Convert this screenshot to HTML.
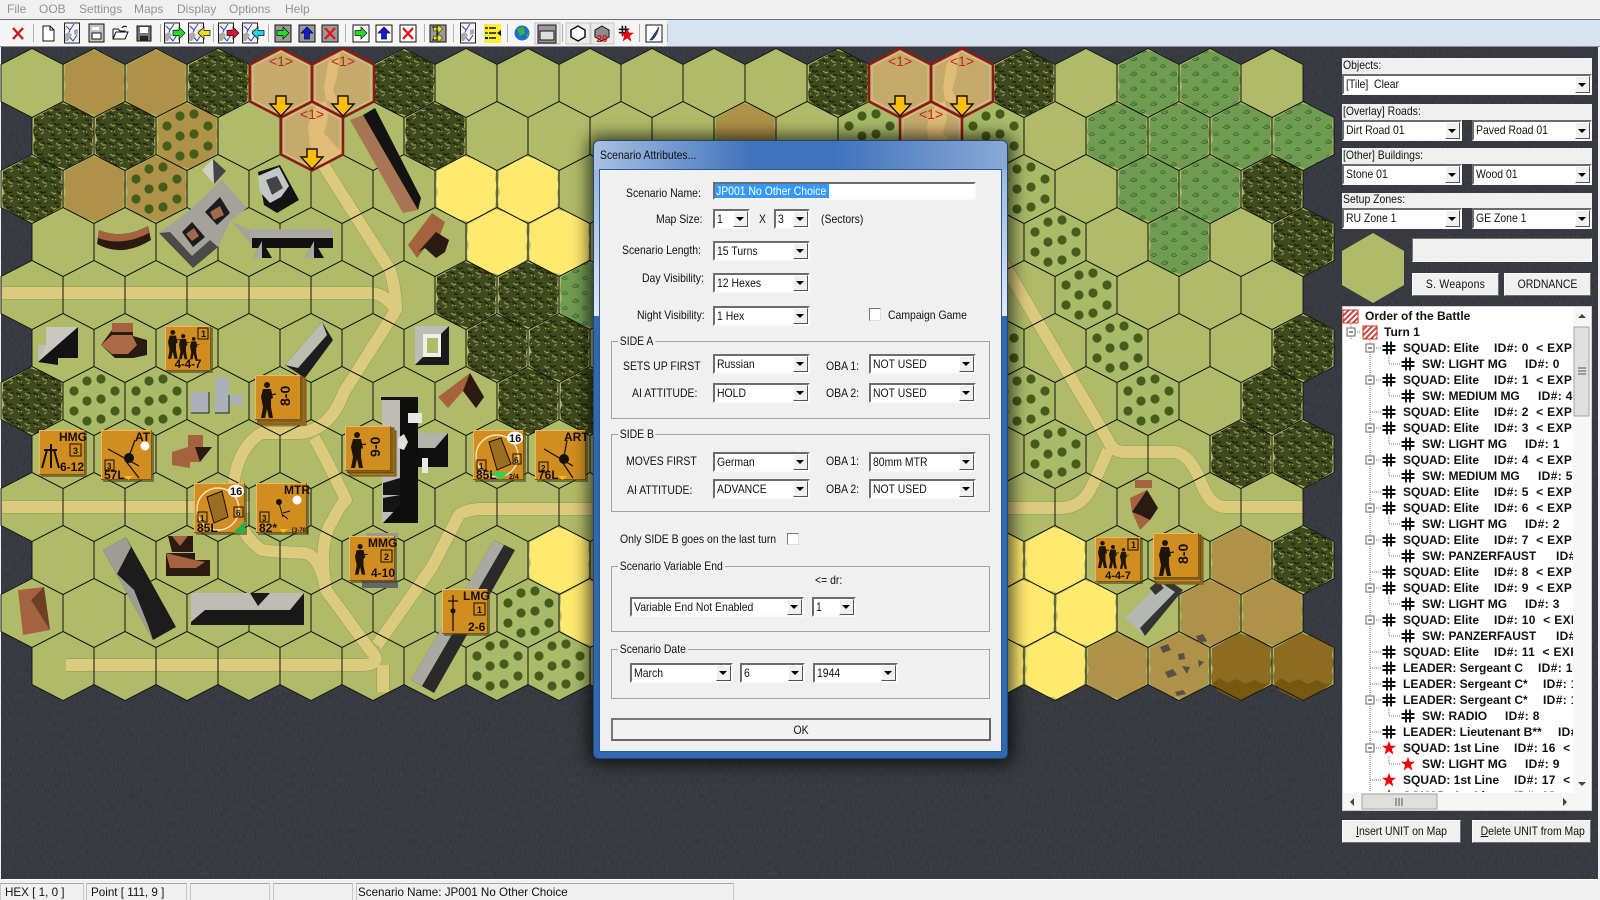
<!DOCTYPE html>
<html><head><meta charset="utf-8"><title>Scenario Attributes</title>
<style>
html,body{margin:0;padding:0;width:1600px;height:900px;overflow:hidden;background:#f0f0f0;font-family:"Liberation Sans",sans-serif}
svg{position:absolute;display:block}
.t{position:absolute;white-space:pre;font:12px/14px "Liberation Sans",sans-serif;color:#111;transform:scaleX(.87);transform-origin:0 0}
.lg{background:#f0f0f0;padding:0 2px}
.gp{position:absolute;border:1px solid #a2a2a2;box-sizing:border-box}
.s{position:absolute;background:#f0f0f0}
.cb{position:absolute;background:#fff;box-sizing:border-box;border:2px solid;border-color:#6c6c6c #fafafa #fafafa #6c6c6c}
.cb::before{content:"";position:absolute;right:0;top:0;bottom:0;width:15px;background:#f0f0f0;border:1px solid;border-color:#fff #555 #555 #fff;box-sizing:border-box}
.cb::after{content:"";position:absolute;right:4px;top:50%;margin-top:-2px;border:4px solid transparent;border-top-color:#000;border-bottom:0}
.cb b{font-weight:normal;position:absolute;left:2px;top:1px;font-size:12px;line-height:14px;white-space:pre;color:#111;transform:scaleX(.87);transform-origin:0 0}
.bt{position:absolute;background:#f0f0f0;box-sizing:border-box;border:1px solid;border-color:#fafafa #707070 #707070 #fafafa;text-align:center;font-size:12px;color:#111}
.bt span{display:block;transform:scaleX(.87);white-space:pre}
#tr{position:absolute;left:1342px;top:306px;width:231px;height:486px;overflow:hidden}
#tr p{position:absolute;margin:0;font:bold 12px/16px "Liberation Sans",sans-serif;color:#111;white-space:pre}
#tr .a{left:61px}#tr .b{left:80px}
#tr i{position:absolute;top:0;font-style:normal;letter-spacing:.35px}
.sb{position:absolute;top:883px;height:17px;background:#f0f0f0;border-top:1px solid #a8a8a8;border-left:1px solid #c8c8c8;border-right:1px solid #c8c8c8;box-sizing:border-box}
</style></head><body>

<svg width="1600" height="900" viewBox="0 0 1600 900" style="left:0;top:0">
<defs>
<filter id="nz" x="0" y="0" width="100%" height="100%"><feTurbulence type="fractalNoise" baseFrequency="0.9 0.18" numOctaves="2" seed="4"/><feColorMatrix values="0 0 0 0 0 0 0 0 0 0 0 0 0 0 0 .9 0 0 0 -.2"/></filter>
<pattern id="pw" width="17" height="15" patternUnits="userSpaceOnUse"><rect width="17" height="15" fill="#3f4a1e"/><path d="M2 3l3 2 2-1M10 7l2 2 3 0M3 11l2-2 2 2M12 13l3-2" stroke="#a2a55c" stroke-width="1" fill="none"/><path d="M1 7l3 1 2 2M8 2l2 2 4-1M5 14l4 0M13 6l3 2" stroke="#1e250a" stroke-width="1.5" fill="none"/></pattern>
<pattern id="pg" width="20" height="15" patternUnits="userSpaceOnUse"><rect width="20" height="15" fill="#709c51"/><path d="M2 6q3 3 7 0M4 6v-2M6 6v-3M8 6v-2M12 13q3 3 6 0M14 13v-2M16 13v-2" stroke="#2f5a2a" stroke-width=".8" fill="none"/></pattern>
<polygon id="p" points="0,-34.5 31,-18.5 31,18.5 0,34.5 -31,18.5 -31,-18.5"/>
<polygon id="wb" points="-2,-33 4,-31 10,-30 17,-26 24,-22 30,-18 29,-10 31,-3 29,4 30,11 29,18 22,22 15,27 9,29 3,33 -3,31 -10,30 -16,26 -23,22 -29,18 -30,10 -28,3 -30,-4 -29,-11 -29,-18 -23,-21 -16,-25 -9,-29"/>
<g id="rw"><use href="#p" x="32"/><use href="#p" x="94"/><use href="#p" x="156"/><use href="#p" x="218"/><use href="#p" x="280"/><use href="#p" x="342"/><use href="#p" x="404"/><use href="#p" x="466"/><use href="#p" x="528"/><use href="#p" x="590"/><use href="#p" x="652"/><use href="#p" x="714"/><use href="#p" x="776"/><use href="#p" x="838"/><use href="#p" x="900"/><use href="#p" x="962"/><use href="#p" x="1024"/><use href="#p" x="1086"/><use href="#p" x="1148"/><use href="#p" x="1210"/><use href="#p" x="1272"/></g>
<g id="all"><use href="#rw" y="83"/><use href="#rw" x="31" y="136"/><use href="#rw" y="189"/><use href="#rw" x="31" y="242"/><use href="#rw" y="295"/><use href="#rw" x="31" y="348"/><use href="#rw" y="401"/><use href="#rw" x="31" y="454"/><use href="#rw" y="507"/><use href="#rw" x="31" y="560"/><use href="#rw" y="613"/><use href="#rw" x="31" y="666"/></g>
<g id="f"><use href="#wb" fill="#ae9248"/></g>
<g id="w"><use href="#wb" fill="url(#pw)"/></g>
<g id="y"><use href="#wb" fill="#ffe96e"/></g>
<g id="g"><use href="#wb" fill="url(#pg)"/></g>
<g id="d"><use href="#wb" fill="#8d6b20"/><path d="M-29 18l7 -6 8 5 10 -4 8 5 10-4 8 4 7-1-8 6-15 9-7 3-6-2-16-8z" fill="#77580f"/></g>
<g id="od" fill="#465c1c"><circle cx="-20" cy="-10" r="4.6"/><circle cx="-20" cy="10" r="4.6"/><circle cx="-7" cy="-20" r="4.6"/><circle cx="-7" cy="0" r="4.6"/><circle cx="-7" cy="20" r="4.6"/><circle cx="7" cy="-22" r="4.6"/><circle cx="7" cy="-2" r="4.6"/><circle cx="7" cy="18" r="4.6"/><circle cx="21" cy="-10" r="4.6"/><circle cx="21" cy="10" r="4.6"/></g>
<g id="o"><use href="#wb" fill="#a9ba68"/><use href="#od"/></g>
<g id="ob"><use href="#wb" fill="#ae9248"/><use href="#od"/></g>
<g id="ss"><use href="#p" fill="#c4aa6b"/></g>
<g id="sr"><use href="#p" fill="none" stroke="#8c1a14" stroke-width="2.5"/><polygon points="0,-31.5 28,-17 28,17 0,31.5 -28,17 -28,-17" fill="none" stroke="#dcc9a0" stroke-width=".8"/><text x="0" y="-17" text-anchor="middle" font-family="Liberation Sans" font-size="14" fill="#c8201a">&lt;1&gt;</text></g>
<g id="ua"><polygon points="-5,13 5,13 5,21 11,21 0,33 -11,21 -5,21" fill="#ffbe0a" stroke="#111" stroke-width="1.4"/></g>
<g id="c1"><rect x="2" y="2" width="46" height="45" fill="#3c3a20" opacity=".55"/><rect width="46" height="45" fill="#d18d1f"/><path d="M.5 45V.5H46" stroke="#efb85e" fill="none"/><path d="M45.5 0V44.5H0" stroke="#7d5510" fill="none"/></g>
<g id="c2"><rect x="2" y="2" width="51" height="50" fill="#3c3a20" opacity=".55"/><rect width="51" height="50" fill="#d18d1f"/><path d="M.5 50V.5H51" stroke="#efb85e" fill="none"/><path d="M50.5 0V49.5H0" stroke="#7d5510" fill="none"/></g>
<g id="sol" fill="#1f1507"><circle cx="6" cy="3" r="3"/><path d="M2 7h8l2 9-2 1v8l2 11H8l-2-9-2 9H0l2-11-2-10z"/><path d="M9 13L15 12" stroke="#1f1507" stroke-width="1.2"/></g>
<g id="md"><rect x="-7.500" y="-10" width="15" height="20" fill="#f4f4f4" stroke="#222"/><path d="M-6-7l4 4-2 5 5 6M-2-3l4-6M1 8l4-6" stroke="#2447b5" fill="none"/><path d="M-7 1l4-2 3 3-4 6h-3zM2-3l4-1v5l-4 1z" fill="#aaa"/></g>
<polygon id="ar" points="-6,-2.5 0,-2.5 0,-6 6,0 0,6 0,2.5 -6,2.5" stroke="#111" stroke-width=".7"/>
<path id="x" d="M-2-6.5V6.5M2-6.5V6.5M-6.5-2H6.5M-6.5 2H6.5" stroke="#111" stroke-width="1.9" fill="none"/>
<polygon id="st" points="0,-7 1.8,-2.2 7,-2.2 2.8,1 4.4,6.5 0,3.2 -4.4,6.5 -2.8,1 -7,-2.2 -1.8,-2.2" fill="#f00000"/>
<pattern id="hat" width="4" height="4" patternUnits="userSpaceOnUse" patternTransform="rotate(-45)"><rect width="4" height="4" fill="#fff"/><rect width="4" height="2" fill="#c9473f"/></pattern>
</defs>

<!-- background -->
<rect width="1600" height="900" fill="#f0f0f0"/>
<rect x="1" y="47" width="1597" height="832" fill="#3d4047"/>
<rect x="1" y="47" width="1597" height="832" filter="url(#nz)" opacity=".35"/>
<rect x="0" y="879" width="1600" height="1" fill="#fff"/>

<!-- hexes -->
<g fill="#b0bb69"><use href="#all"/></g>
<g>
<use href="#f" x="94" y="83"/><use href="#f" x="156" y="83"/><use href="#w" x="218" y="83"/><use href="#w" x="404" y="83"/><use href="#w" x="838" y="83"/><use href="#w" x="1024" y="83"/><use href="#g" x="1148" y="83"/><use href="#g" x="1210" y="83"/>
<use href="#f" x="63" y="136"/><use href="#f" x="125" y="136"/><use href="#w" x="63" y="136"/><use href="#w" x="125" y="136"/><use href="#ob" x="187" y="136"/><use href="#w" x="435" y="136"/><use href="#f" x="745" y="136"/><use href="#o" x="869" y="136"/><use href="#o" x="993" y="136"/><use href="#g" x="1117" y="136"/><use href="#g" x="1179" y="136"/><use href="#g" x="1241" y="136"/><use href="#g" x="1303" y="136"/>
<use href="#w" x="32" y="189"/><use href="#f" x="94" y="189"/><use href="#ob" x="156" y="189"/><use href="#y" x="466" y="189"/><use href="#y" x="528" y="189"/><use href="#o" x="1024" y="189"/><use href="#g" x="1148" y="189"/><use href="#g" x="1210" y="189"/><use href="#w" x="1272" y="189"/>
<use href="#y" x="497" y="242"/><use href="#y" x="559" y="242"/><use href="#o" x="1055" y="242"/><use href="#g" x="1179" y="242"/><use href="#w" x="1303" y="242"/>
<use href="#w" x="466" y="295"/><use href="#w" x="528" y="295"/><use href="#g" x="590" y="295"/><use href="#o" x="1086" y="295"/>
<use href="#w" x="497" y="348"/><use href="#w" x="559" y="348"/><use href="#o" x="993" y="348"/><use href="#o" x="1117" y="348"/><use href="#w" x="1303" y="348"/>
<use href="#w" x="32" y="401"/><use href="#o" x="94" y="401"/><use href="#o" x="156" y="401"/><use href="#w" x="528" y="401"/><use href="#w" x="590" y="401"/><use href="#o" x="1024" y="401"/><use href="#o" x="1148" y="401"/><use href="#w" x="1272" y="401"/>
<use href="#o" x="1055" y="454"/><use href="#w" x="1241" y="454"/><use href="#w" x="1303" y="454"/>
<use href="#y" x="559" y="560"/><use href="#y" x="993" y="560"/><use href="#y" x="1055" y="560"/><use href="#f" x="1241" y="560"/><use href="#w" x="1303" y="560"/>
<use href="#o" x="528" y="613"/><use href="#y" x="590" y="613"/><use href="#y" x="1024" y="613"/><use href="#y" x="1086" y="613"/><use href="#f" x="1210" y="613"/><use href="#f" x="1272" y="613"/>
<use href="#o" x="497" y="666"/><use href="#o" x="559" y="666"/><use href="#y" x="993" y="666"/><use href="#y" x="1055" y="666"/><use href="#f" x="1117" y="666"/><use href="#f" x="1179" y="666"/><use href="#d" x="1241" y="666"/><use href="#d" x="1303" y="666"/>
</g>

<!-- roads -->
<g fill="none" stroke-linejoin="round">
<path d="M2 293H370Q385 293 396 310L344 392Q330 430 300 433H262Q240 445 234 480Q232 530 262 550Q275 552 305 553Q320 556 326 590L370 650Q385 665 360 665H66M322 163L390 270Q396 290 396 310M314 438Q322 450 346 500Q340 505 333 520Q318 540 326 590M2 507H250M383 665V692M377 645L432 567L459 515Q465 510 480 509H592M1000 258L1108 440Q1112 452 1125 452H1175Q1190 455 1200 480Q1210 507 1225 507H1303M1108 450Q1100 470 1090 490Q1080 508 1060 508H1000" stroke="#878c4a" stroke-width="13" stroke-opacity=".75"/>
<path d="M2 293H370Q385 293 396 310L344 392Q330 430 300 433H262Q240 445 234 480Q232 530 262 550Q275 552 305 553Q320 556 326 590L370 650Q385 665 360 665H66M322 163L390 270Q396 290 396 310M314 438Q322 450 346 500Q340 505 333 520Q318 540 326 590M2 507H250M383 665V692M377 645L432 567L459 515Q465 510 480 509H592M1000 258L1108 440Q1112 452 1125 452H1175Q1190 455 1200 480Q1210 507 1225 507H1303M1108 450Q1100 470 1090 490Q1080 508 1060 508H1000" stroke="#dccb7c" stroke-width="12"/>
</g>

<!-- grid -->
<g fill="none" stroke="#111" stroke-width=".9"><use href="#all"/></g>

<!-- setup zones -->
<use href="#ss" x="281" y="83"/><use href="#ss" x="343" y="83"/><use href="#ss" x="900" y="83"/><use href="#ss" x="962" y="83"/><use href="#ss" x="312" y="136"/><use href="#ss" x="931" y="136"/>
<g fill="#e0bc76"><path d="M328 63L324 87L326 100L341 107L333 90L337 77L340 52z"/><path d="M328 117L324 133L341 152L322 168L310 147L308 127L312 110L326 100z"/><path d="M947 63L943 87L945 100L960 107L952 90L956 77L959 52z"/><path d="M947 117L943 133L960 152L941 168L929 147L927 127L931 110L945 100z"/></g>
<use href="#sr" x="281" y="83"/><use href="#sr" x="343" y="83"/><use href="#sr" x="900" y="83"/><use href="#sr" x="962" y="83"/><use href="#sr" x="312" y="136"/><use href="#sr" x="931" y="136"/>
<use href="#ua" x="281" y="83"/><use href="#ua" x="343" y="83"/><use href="#ua" x="900" y="83"/><use href="#ua" x="962" y="83"/><use href="#ua" x="312" y="136"/>

<!-- rough -->
<g fill="#55504a"><path d="M1160 647l8-3 3 6-8 3zM1196 636l7-2 4 7-8 2zM1178 654l6-1 1 6-6 1zM1198 660l6 2-5 5zM1165 672l8-3 4 6-9 3zM1182 666l8 1-3 7zM1175 692l8-2 3 4-9 2z"/></g>

<!-- buildings -->
<g>
<path d="M213 159L226 171L214 184L202 170z" fill="#cfcfc7"/><path d="M213 159L226 171L214 184z" fill="#444"/>
<path d="M258 172L280 165L299 200L277 213L264 205z" fill="#131313"/><path d="M258 176L279 167L289 186L281 197L270 203L260 192z" fill="#c3c8c6"/><path d="M266 180L277 176L283 188L272 195z" fill="#444"/>
<path d="M159 233L190 210L222 180L247 208L230 222L218 247L193 268z" fill="#a3a39b"/><path d="M159 233L193 268L218 247L210 240L192 256L170 232z" fill="#4a4a46"/><path d="M182 232L192 222L205 237L193 247z" fill="#1c1c1c"/><path d="M186 234L194 228L199 236L192 241z" fill="#a26a4a"/><path d="M205 212L220 197L230 213L217 225z" fill="#1c1c1c"/><path d="M210 212L220 206L224 215L214 220z" fill="#a26a4a"/>
<path d="M232 222L250 230L333 229V248H255z" fill="#a3a39b"/><rect x="252" y="238" width="81" height="10" fill="#111"/><rect x="250" y="229" width="83" height="9" fill="#aaaaa2"/>
<path d="M253 258L262 241L272 258z" fill="#111"/><path d="M253 258L262 241V258z" fill="#aaaaa2"/><path d="M305 258L314 241L324 258z" fill="#111"/><path d="M305 258L314 241V258z" fill="#aaaaa2"/>
<path d="M99 230Q122 240 148 226L151 240Q122 258 97 244z" fill="#2a1a12"/><path d="M99 230Q122 240 148 226L149 233Q122 247 98 238z" fill="#a5623f"/>
<path d="M350 120L363 115L418 210L403 213z" fill="#a87454"/><path d="M363 115L375 108L421 198L418 210z" fill="#131313"/>
<path d="M408 245L432 213L445 222L440 235L449 240L445 252L436 258L425 248L417 258z" fill="#a5623f"/><path d="M418 252L436 232L449 240L445 252L436 258L425 248z" fill="#2a1a12"/>
<path d="M38 362L46 352V345L78 327V358H58V365z" fill="#131313"/><path d="M38 362V345L46 345L78 327L46 327V345z" fill="#bdbdb5"/><path d="M38 362L78 327H46L46 345z" fill="#c8c8c0"/>
<path d="M101 345L112 330V323H133V336L147 340V355L133 358H115z" fill="#2a1a12"/><path d="M101 345L112 335H132L137 345L128 354H112z" fill="#ad6a48"/><path d="M112 323H133V332H112z" fill="#a5623f"/>
<path d="M285 365L322 322L333 340L305 378z" fill="#1d1d1d"/><path d="M285 365L322 322L327 335L298 368z" fill="#b9bdb2"/>
<path d="M415 326H449V365H415z" fill="#bdbdb5"/><path d="M423 334H441V357H423z" fill="#f0f0ea"/><path d="M427 338H438V353H427z" fill="#b0bb69"/><path d="M449 326V365H415L423 357H441V334z" fill="#1a1a1a"/>
<path d="M191 392H209V413H191zM215 377H229V395H243V405H229V413H215z" fill="#aab0b8"/><path d="M209 392V413H191M229 395V413H215" stroke="#222" fill="none"/>
<path d="M438 397L470 373L484 397L476 408L463 391L448 408z" fill="#a5623f"/><path d="M470 373L484 397L476 408L463 391z" fill="#2a1a12"/>
<rect x="381" y="397" width="37" height="3" fill="#111"/><rect x="382" y="400" width="18" height="123" fill="#bdbdb5"/><rect x="400" y="400" width="18" height="123" fill="#0d0d0d"/>
<path d="M418 433H448L435 448H418z" fill="#b3b3ab"/><path d="M448 433V467H418V448H435z" fill="#101010"/><path d="M408 413H422V423H408zM422 458H428V473H422z" fill="#e8e8e0"/><path d="M383 483L400 478V495H383zM383 498L400 495V512H383z" fill="#151515"/><path d="M383 523L400 505L418 523z" fill="#0d0d0d"/><path d="M398 438l6-4 4 8-4 8-6-2z" fill="#e0e0d8"/>
<path d="M172 465V452L188 447V435H203V447H212L200 462H190V468z" fill="#a5623f"/><path d="M195 447L212 447L200 462z" fill="#2a1a12"/>
<path d="M103 550L126 537L176 627L153 640z" fill="#1c1c1c"/><path d="M103 550L126 537L131 547L117 574L134 590L148 625L153 640z" fill="#9d9d95"/>
<path d="M168 536H193V552H172z" fill="#2a1a12"/><path d="M172 536H188L180 546z" fill="#a5623f"/><path d="M166 553H195V560H210V576H166z" fill="#2a1a12"/><path d="M166 553L195 560L205 562L196 568H170z" fill="#a5623f"/>
<path d="M18 590L44 587L50 630L23 635z" fill="#a5623f"/><path d="M31 600L44 587L50 630z" fill="#6d3f27"/>
<path d="M191 593H304V625H191z" fill="#191919"/><path d="M191 593L205 610H290L304 593H270L258 606L250 593zM191 593V622L205 610z" fill="#bdbdb5"/>
<path d="M494 540L515 550L434 693L411 680z" fill="#2a2a2a"/><path d="M494 540L504 545L422 686L411 680z" fill="#aaaaa2"/>
<path d="M1135 480H1152V488H1135zM1130 498L1147 490L1158 508L1150 520L1140 530L1132 512z" fill="#a5623f"/><path d="M1147 490L1158 508L1150 520L1140 515L1132 512z" fill="#2a1a12"/>
<path d="M1125 618L1165 578L1183 590L1145 636z" fill="#b4b8b2"/><path d="M1145 636L1183 590L1165 578L1160 582L1175 592L1140 628z" fill="#333"/><rect x="1151" y="584" width="11" height="9" fill="#333" transform="rotate(-40 1156 588)"/>
<rect x="366" y="533" width="32" height="5" fill="#9a9a92"/><rect x="362" y="580" width="36" height="8" fill="#666"/>
</g>

<!-- counters -->
<g font-family="Liberation Sans" font-weight="bold" fill="#17100a">
<g transform="translate(165,326)"><use href="#c1"/><rect x="33" y="2" width="10" height="11" fill="none" stroke="#111"/><text x="36" y="11" font-size="9">1</text><use href="#sol" transform="translate(3,4) scale(.8)"/><use href="#sol" transform="translate(14,8) scale(.7)"/><use href="#sol" transform="translate(25,11) scale(.62)"/><text x="23" y="42" font-size="11.500" text-anchor="middle">4-4-7</text></g>
<g transform="translate(260,379)"><rect width="46" height="46" fill="#b47a18" stroke="#6b4a10"/></g>
<g transform="translate(258,377)"><rect width="46" height="46" fill="#d18d1f" stroke="#6b4a10"/></g>
<g transform="translate(255,375)"><use href="#c1"/><use href="#sol" x="6" y="7"/><text font-size="14" transform="translate(35,31) rotate(-90)">8-0</text></g>
<g transform="translate(39,430)"><use href="#c1"/><text x="20" y="11" font-size="12">HMG</text><rect x="31" y="14" width="11" height="12" fill="none" stroke="#111"/><text x="34" y="24" font-size="9">3</text><path d="M5 20H18M12 14V38M8 20L3 38M15 20L20 38" stroke="#111" stroke-width="2" fill="none"/><text x="21" y="41" font-size="12">6-12</text></g>
<g transform="translate(101,430)"><use href="#c2"/><text x="34" y="11" font-size="12">AT</text><circle cx="44" cy="16" r="4.5" fill="#fff"/><path d="M7 19L38 36M34 10L26 32M24 30L38 48" stroke="#111" stroke-width="1.2" fill="none"/><circle cx="28" cy="28" r="5" fill="#111"/><rect x="4" y="30" width="9" height="10" fill="none" stroke="#111"/><text x="6" y="39" font-size="8">3</text><text x="3" y="49" font-size="12">57L</text><polygon points="23,46 32,46 27.500,50" fill="#f0c020"/></g>
<g transform="translate(350,431)"><rect width="46" height="45" fill="#b47a18" stroke="#6b4a10"/></g>
<g transform="translate(348,428)"><rect width="46" height="45" fill="#d18d1f" stroke="#6b4a10"/></g>
<g transform="translate(345,426)"><use href="#c1"/><use href="#sol" x="6" y="6"/><text font-size="14" transform="translate(35,31) rotate(-90)">9-0</text></g>
<g transform="translate(473,430)"><use href="#c2"/><circle cx="24" cy="26" r="21" fill="none" stroke="#f3e4c0" stroke-width="1.4"/><ellipse cx="42" cy="8" rx="8" ry="6.500" fill="#fff"/><text x="36" y="12" font-size="11">16</text><path d="M16 12L28 8L38 34L24 40z" fill="#9a6d20" stroke="#111"/><rect x="4" y="30" width="9" height="10" fill="none" stroke="#111"/><text x="6" y="39" font-size="8">1</text><rect x="40" y="24" width="8" height="10" fill="none" stroke="#111"/><text x="41" y="33" font-size="8">6</text><text x="3" y="49" font-size="12">85L</text><text x="36" y="49" font-size="7">2/4</text><polygon points="18,42 36,42 27,50" fill="#3ad04e"/></g>
<g transform="translate(535,430)"><use href="#c2"/><text x="29" y="11" font-size="12">ART</text><path d="M9 19L38 36M32 10L28 32M26 30L38 48" stroke="#111" stroke-width="1.2" fill="none"/><circle cx="29" cy="29" r="5" fill="#111"/><rect x="4" y="32" width="9" height="10" fill="none" stroke="#111"/><text x="6" y="41" font-size="8">2</text><text x="3" y="49" font-size="12">76L</text><polygon points="23,46 32,46 27.500,50" fill="#f0c020"/></g>
<g transform="translate(194,483)"><use href="#c2"/><circle cx="24" cy="26" r="21" fill="none" stroke="#f3e4c0" stroke-width="1.4"/><ellipse cx="42" cy="8" rx="8" ry="6.500" fill="#fff"/><text x="36" y="12" font-size="11">16</text><path d="M13 14L28 8L34 34L20 40z" fill="#9a6d20" stroke="#111"/><rect x="4" y="29" width="9" height="10" fill="none" stroke="#111"/><text x="6" y="38" font-size="8">1</text><rect x="40" y="24" width="9" height="10" fill="none" stroke="#111"/><text x="42" y="33" font-size="8">6</text><text x="3" y="49" font-size="12">85L</text><polygon points="39,50 51,50 51,38" fill="#22b14c"/></g>
<g transform="translate(256,483)"><use href="#c2"/><text x="28" y="11" font-size="12">MTR</text><circle cx="41" cy="17" r="4.5" fill="#fff"/><circle cx="23" cy="19" r="3" fill="#111"/><path d="M23 20L27 34M27 30L34 28M27 32L32 36" stroke="#111" fill="none"/><rect x="4" y="29" width="9" height="10" fill="none" stroke="#111"/><text x="6" y="38" font-size="8">3</text><text x="3" y="49" font-size="12">82*</text><polygon points="23,46 32,46 27.500,50" fill="#f0c020"/><text x="36" y="49" font-size="6">[3-78]</text></g>
<g transform="translate(349,536)"><use href="#c1"/><text x="19" y="11" font-size="12">MMG</text><rect x="32" y="14" width="11" height="12" fill="none" stroke="#111"/><text x="35" y="24" font-size="9">2</text><use href="#sol" transform="translate(6,8) scale(.85)"/><text x="22" y="41" font-size="12">4-10</text></g>
<g transform="translate(442,589)"><use href="#c1"/><text x="21" y="11" font-size="12">LMG</text><rect x="32" y="14" width="11" height="12" fill="none" stroke="#111"/><text x="35" y="24" font-size="9">1</text><path d="M11 6V42M6 12H16" stroke="#111" stroke-width="1.3"/><circle cx="11" cy="22" r="2.500" fill="#111"/><text x="26" y="42" font-size="12">2-6</text></g>
<g transform="translate(1095,537)"><use href="#c1"/><rect x="33" y="2" width="10" height="11" fill="none" stroke="#111"/><text x="36" y="11" font-size="9">1</text><use href="#sol" transform="translate(3,4) scale(.75)"/><use href="#sol" transform="translate(14,8) scale(.65)"/><use href="#sol" transform="translate(25,11) scale(.58)"/><text x="23" y="42" font-size="11" text-anchor="middle">4-4-7</text></g>
<g transform="translate(1157,537)"><rect width="46" height="47" fill="#b47a18" stroke="#6b4a10"/></g>
<g transform="translate(1155,535)"><rect width="46" height="47" fill="#d18d1f" stroke="#6b4a10"/></g>
<g transform="translate(1153,533)"><use href="#c1"/><use href="#sol" x="6" y="7"/><text font-size="14" transform="translate(35,31) rotate(-90)">8-0</text></g>
</g>

<!-- toolbar & menu -->
<rect x="0" y="0" width="1600" height="19" fill="#f0f0f0"/><rect x="0" y="19" width="1600" height="1" fill="#6f6f6f"/>
<rect x="0" y="20" width="667" height="27" fill="#f5f5f5"/>
<rect x="667" y="20" width="933" height="27" fill="#d7e2f2"/><rect x="0" y="46" width="1600" height="1" fill="#8f9096"/>
<g fill="#b0b0b0"><rect x="33" y="24" width="1" height="18"/><rect x="160" y="24" width="1" height="18"/><rect x="213" y="24" width="1" height="18"/><rect x="268" y="24" width="1" height="18"/><rect x="345" y="24" width="1" height="18"/><rect x="424" y="24" width="1" height="18"/><rect x="453" y="24" width="1" height="18"/><rect x="507" y="24" width="1" height="18"/><rect x="562" y="24" width="1" height="18"/><rect x="639" y="24" width="1" height="18"/><rect x="667" y="24" width="1" height="18"/></g>
<path d="M13 28L23 39M23 28L13 39" stroke="#d01818" stroke-width="2.4" fill="none"/>
<path d="M43 26H50L54 30V41H43z" fill="#fff" stroke="#111"/><path d="M50 26V30H54" fill="none" stroke="#111"/>
<use href="#md" x="72" y="33"/>
<rect x="89" y="24" width="15" height="18" fill="#c4c4c4" stroke="#111"/><rect x="92" y="33" width="9" height="6" fill="#fff" stroke="#111"/><rect x="92" y="27" width="7" height="3" fill="#fff"/>
<path d="M113 29V39H125L128 32H116L113 39M113 29H118L120 31H125V32" fill="#fff" stroke="#111"/><path d="M122 28Q124 25 127 27" stroke="#111" fill="none"/>
<path d="M137 26H151V41H137z" fill="#777" stroke="#111"/><rect x="140" y="27" width="8" height="6" fill="#fff"/><rect x="140" y="36" width="8" height="5" fill="#222"/>
<use href="#md" x="172" y="33"/><use href="#ar" x="179" y="33" fill="#22dd22"/>
<use href="#md" x="196" y="33"/><use href="#ar" transform="translate(204,33) rotate(180)" fill="#f0e020"/>
<use href="#md" x="226" y="33"/><use href="#ar" x="233" y="33" fill="#e01030"/>
<use href="#md" x="250" y="33"/><use href="#ar" transform="translate(258,33) rotate(180)" fill="#22d8e8"/>
<rect x="275" y="25" width="16" height="17" fill="#9a9a9a" stroke="#111"/><use href="#ar" x="283" y="33" fill="#22dd22"/>
<rect x="299" y="25" width="16" height="17" fill="#9a9a9a" stroke="#111"/><use href="#ar" transform="translate(307,33) rotate(-90)" fill="#0a1ee0"/>
<rect x="322" y="25" width="16" height="17" fill="#9a9a9a" stroke="#111"/><path d="M325 28L335 39M335 28L325 39" stroke="#e01818" stroke-width="2.400"/>
<rect x="353" y="25" width="16" height="17" fill="#fff" stroke="#111"/><use href="#ar" x="361" y="33" fill="#22dd22"/>
<rect x="376" y="25" width="16" height="17" fill="#fff" stroke="#111"/><use href="#ar" transform="translate(384,33) rotate(-90)" fill="#0a1ee0"/>
<rect x="400" y="25" width="16" height="17" fill="#fff" stroke="#111"/><path d="M403 28L413 39M413 28L403 39" stroke="#e01818" stroke-width="2.400"/>
<rect x="430" y="25" width="16" height="17" fill="#9a9a9a" stroke="#111"/><use href="#ar" transform="translate(438,29) scale(.75)" fill="#f0e020"/><use href="#ar" transform="translate(438,38) scale(.75)" fill="#f0e020"/><path d="M432 27H437V40H432" fill="none" stroke="#111"/>
<use href="#md" x="468" y="33"/>
<rect x="484" y="24" width="17" height="19" fill="#fbf030"/><path d="M489 28H496M489 33H496M489 38H496" stroke="#111" stroke-width="1.500"/><rect x="485" y="27" width="3" height="2" fill="#c00"/><rect x="485" y="32" width="3" height="2" fill="#090"/><rect x="485" y="37" width="3" height="2" fill="#00c"/><path d="M497 33L501 30V36z" fill="#111"/>
<circle cx="522" cy="33" r="7.500" fill="#1a6ed0"/><path d="M517 28L524 27L525 33L520 36zM526 35L529 32L528 38z" fill="#3fae3f"/>
<rect x="535" y="23" width="25" height="21" fill="#ececec" stroke="#c0c0c0"/><rect x="538" y="25" width="18" height="18" fill="#999" stroke="#111"/><rect x="540" y="31" width="14" height="9" fill="#ddd" stroke="#111"/>
<rect x="566" y="23" width="24" height="21" fill="#ececec" stroke="#c8c8c8"/><polygon points="578,26 585,30 585,37 578,41 571,37 571,30" fill="#fff" stroke="#111" stroke-width="1.500"/>
<rect x="591" y="23" width="23" height="21" fill="#e8e8e8" stroke="#c8c8c8"/><polygon points="602,26 609,30 609,37 602,41 595,37 595,30" fill="#8d8d8d" stroke="#111"/><text x="602" y="42" text-anchor="middle" font-family="Liberation Sans" font-weight="bold" font-size="10" fill="#e01010">20</text>
<use href="#x" transform="translate(624,31) scale(.8)"/><use href="#st" transform="translate(627,35)"/>
<rect x="646" y="25" width="16" height="17" fill="#fff" stroke="#111"/><path d="M650 40Q656 32 659 27Q657 36 652 40z" fill="#2450a8" stroke="#111" stroke-width=".6"/>

<text font-family="Liberation Sans" font-size="12" fill="#929292" y="13"><tspan x="7">File</tspan><tspan x="39">OOB</tspan><tspan x="79">Settings</tspan><tspan x="134">Maps</tspan><tspan x="177">Display</tspan><tspan x="229">Options</tspan><tspan x="285">Help</tspan></text>

<!-- panel hex preview -->
<polygon points="1373,233 1404,251 1404,285 1373,303 1342,285 1342,251" fill="#b0bb69"/>
</svg>

<!-- right panel -->
<div class="s" style="left:1342px;top:58px;width:250px;height:16px"></div><div class="t" style="left:1343px;top:58px">Objects:</div>
<div class="cb" style="left:1342px;top:74px;width:250px;height:21px"><b>[Tile]  Clear</b></div>
<div class="s" style="left:1342px;top:104px;width:250px;height:16px"></div><div class="t" style="left:1343px;top:104px">[Overlay] Roads:</div>
<div class="cb" style="left:1342px;top:120px;width:120px;height:21px"><b>Dirt Road 01</b></div><div class="cb" style="left:1472px;top:120px;width:120px;height:21px"><b>Paved Road 01</b></div>
<div class="s" style="left:1342px;top:148px;width:250px;height:16px"></div><div class="t" style="left:1343px;top:148px">[Other] Buildings:</div>
<div class="cb" style="left:1342px;top:164px;width:120px;height:21px"><b>Stone 01</b></div><div class="cb" style="left:1472px;top:164px;width:120px;height:21px"><b>Wood 01</b></div>
<div class="s" style="left:1342px;top:193px;width:250px;height:15px"></div><div class="t" style="left:1343px;top:192px">Setup Zones:</div>
<div class="cb" style="left:1342px;top:208px;width:120px;height:21px"><b>RU Zone 1</b></div><div class="cb" style="left:1472px;top:208px;width:120px;height:21px"><b>GE Zone 1</b></div>
<div class="s" style="left:1412px;top:238px;width:180px;height:24px;border:1px solid #777;box-sizing:border-box;border-right-color:#fff;border-bottom-color:#fff"></div>
<div class="bt" style="left:1412px;top:273px;width:87px;height:23px;line-height:21px"><span style="letter-spacing:.3px">S. Weapons</span></div>
<div class="bt" style="left:1504px;top:273px;width:87px;height:23px;line-height:21px"><span>ORDNANCE</span></div>

<!-- tree -->
<div style="position:absolute;left:1342px;top:306px;width:250px;height:505px;background:#fff;box-sizing:border-box;border:1px solid #d0d0d0"></div>
<div id="tr">
<p style="left:23px;top:2px">Order of the Battle</p>
<p style="left:42px;top:18px">Turn 1</p>
<p class="a" style="top:34px">SQUAD: Elite<i style="left:91px">ID#: 0  &lt; EXP</i></p>
<p class="b" style="top:50px">SW: LIGHT MG<i style="left:103px">ID#: 0</i></p>
<p class="a" style="top:66px">SQUAD: Elite<i style="left:91px">ID#: 1  &lt; EXP</i></p>
<p class="b" style="top:82px">SW: MEDIUM MG<i style="left:116px">ID#: 4</i></p>
<p class="a" style="top:98px">SQUAD: Elite<i style="left:91px">ID#: 2  &lt; EXP</i></p>
<p class="a" style="top:114px">SQUAD: Elite<i style="left:91px">ID#: 3  &lt; EXP</i></p>
<p class="b" style="top:130px">SW: LIGHT MG<i style="left:103px">ID#: 1</i></p>
<p class="a" style="top:146px">SQUAD: Elite<i style="left:91px">ID#: 4  &lt; EXP</i></p>
<p class="b" style="top:162px">SW: MEDIUM MG<i style="left:116px">ID#: 5</i></p>
<p class="a" style="top:178px">SQUAD: Elite<i style="left:91px">ID#: 5  &lt; EXP</i></p>
<p class="a" style="top:194px">SQUAD: Elite<i style="left:91px">ID#: 6  &lt; EXP</i></p>
<p class="b" style="top:210px">SW: LIGHT MG<i style="left:103px">ID#: 2</i></p>
<p class="a" style="top:226px">SQUAD: Elite<i style="left:91px">ID#: 7  &lt; EXP</i></p>
<p class="b" style="top:242px">SW: PANZERFAUST<i style="left:134px">ID#: 6</i></p>
<p class="a" style="top:258px">SQUAD: Elite<i style="left:91px">ID#: 8  &lt; EXP</i></p>
<p class="a" style="top:274px">SQUAD: Elite<i style="left:91px">ID#: 9  &lt; EXP</i></p>
<p class="b" style="top:290px">SW: LIGHT MG<i style="left:103px">ID#: 3</i></p>
<p class="a" style="top:306px">SQUAD: Elite<i style="left:91px">ID#: 10  &lt; EXP</i></p>
<p class="b" style="top:322px">SW: PANZERFAUST<i style="left:134px">ID#: 7</i></p>
<p class="a" style="top:338px">SQUAD: Elite<i style="left:91px">ID#: 11  &lt; EXP</i></p>
<p class="a" style="top:354px">LEADER: Sergeant C<i style="left:135px">ID#: 12</i></p>
<p class="a" style="top:370px">LEADER: Sergeant C*<i style="left:140px">ID#: 13</i></p>
<p class="a" style="top:386px">LEADER: Sergeant C*<i style="left:140px">ID#: 14</i></p>
<p class="b" style="top:402px">SW: RADIO<i style="left:83px">ID#: 8</i></p>
<p class="a" style="top:418px">LEADER: Lieutenant B**<i style="left:155px">ID#: 15</i></p>
<p class="a" style="top:434px">SQUAD: 1st Line<i style="left:111px">ID#: 16  &lt;</i></p>
<p class="b" style="top:450px">SW: LIGHT MG<i style="left:103px">ID#: 9</i></p>
<p class="a" style="top:466px">SQUAD: 1st Line<i style="left:111px">ID#: 17  &lt;</i></p>
<p class="a" style="top:482px">SQUAD: 1st Line<i style="left:111px">ID#: 18  &lt;</i></p>
</div>
<svg width="250" height="505" viewBox="1342 306 250 505" style="left:1342px;top:306px">
<defs><clipPath id="tc"><rect x="1342" y="306" width="231" height="486"/></clipPath></defs>
<rect x="1573" y="307" width="18" height="486" fill="#f6f6f6"/>
<path d="M1578 318L1582 314L1586 318z" fill="#444"/><path d="M1578 782L1582 786L1586 782z" fill="#444"/>
<rect x="1574" y="327" width="15" height="89" fill="#dfdfdf" stroke="#a6a6a6"/><path d="M1578 368H1586M1578 371H1586M1578 374H1586" stroke="#555"/>
<rect x="1343" y="793" width="248" height="17" fill="#f6f6f6"/>
<path d="M1354 798L1350 802L1354 806z" fill="#444"/><path d="M1563 798L1567 802L1563 806z" fill="#444"/>
<rect x="1362" y="794" width="75" height="15" fill="#dfdfdf" stroke="#a6a6a6"/><path d="M1396 798V806M1399 798V806M1402 798V806" stroke="#555"/>
<g clip-path="url(#tc)">
<path d="M1351 322V340M1351 332H1361M1370 340V792M1370 348H1382M1370 380H1382M1370 412H1382M1370 428H1382M1370 460H1382M1370 492H1382M1370 508H1382M1370 540H1382M1370 572H1382M1370 588H1382M1370 620H1382M1370 652H1382M1370 668H1382M1370 684H1382M1370 700H1382M1370 732H1382M1370 748H1382M1370 780H1382M1389 356V364H1401M1389 388V396H1401M1389 436V444H1401M1389 468V476H1401M1389 516V524H1401M1389 548V556H1401M1389 596V604H1401M1389 628V636H1401M1389 708V716H1401M1389 756V764H1401" stroke="#777" stroke-dasharray="1 1" fill="none"/>
<rect x="1343" y="310" width="15" height="13" fill="url(#hat)" stroke="#c83028"/>
<rect x="1363" y="326" width="14" height="13" fill="url(#hat)" stroke="#c83028"/>
<g fill="#fff" stroke="#666"><rect x="1347" y="328" width="8" height="8"/>
<rect x="1366" y="344" width="8" height="8"/><rect x="1366" y="376" width="8" height="8"/><rect x="1366" y="424" width="8" height="8"/><rect x="1366" y="456" width="8" height="8"/><rect x="1366" y="504" width="8" height="8"/><rect x="1366" y="536" width="8" height="8"/><rect x="1366" y="584" width="8" height="8"/><rect x="1366" y="616" width="8" height="8"/><rect x="1366" y="696" width="8" height="8"/><rect x="1366" y="744" width="8" height="8"/></g>
<path d="M1349 332H1353M1368 348H1372M1368 380H1372M1368 428H1372M1368 460H1372M1368 508H1372M1368 540H1372M1368 588H1372M1368 620H1372M1368 700H1372M1368 748H1372" stroke="#222"/>
<use href="#x" x="1389" y="348"/><use href="#x" x="1408" y="364"/><use href="#x" x="1389" y="380"/><use href="#x" x="1408" y="396"/><use href="#x" x="1389" y="412"/><use href="#x" x="1389" y="428"/><use href="#x" x="1408" y="444"/><use href="#x" x="1389" y="460"/><use href="#x" x="1408" y="476"/><use href="#x" x="1389" y="492"/><use href="#x" x="1389" y="508"/><use href="#x" x="1408" y="524"/><use href="#x" x="1389" y="540"/><use href="#x" x="1408" y="556"/><use href="#x" x="1389" y="572"/><use href="#x" x="1389" y="588"/><use href="#x" x="1408" y="604"/><use href="#x" x="1389" y="620"/><use href="#x" x="1408" y="636"/><use href="#x" x="1389" y="652"/><use href="#x" x="1389" y="668"/><use href="#x" x="1389" y="684"/><use href="#x" x="1389" y="700"/><use href="#x" x="1408" y="716"/><use href="#x" x="1389" y="732"/>
<use href="#st" x="1389" y="748"/><use href="#st" x="1408" y="764"/><use href="#st" x="1389" y="780"/><use href="#st" x="1389" y="796"/>
</g>
</svg>

<div class="bt" style="left:1342px;top:820px;width:119px;height:23px;line-height:21px"><span><u>I</u>nsert UNIT on Map</span></div>
<div class="bt" style="left:1472px;top:820px;width:119px;height:23px;line-height:21px"><span><u>D</u>elete UNIT from Map</span></div>

<!-- dialog -->
<div style="position:absolute;left:593px;top:140px;width:415px;height:619px;border-radius:6px;box-shadow:0 0 16px 5px rgba(0,0,0,.65);background:linear-gradient(90deg,#a8c1e2,#3f73bc 38%,#3f73bc 58%,#8aa9d6);box-sizing:border-box;border:1px solid #23456f;overflow:hidden">
<div style="position:absolute;left:0;top:29px;width:5px;height:146px;background:linear-gradient(#9bb7da,#e0e8f2)"></div>
<div style="position:absolute;right:0;top:29px;width:5px;height:146px;background:linear-gradient(#9bb7da,#e0e8f2)"></div>
<div style="position:absolute;left:0;top:175px;width:5px;height:445px;background:#3068b2"></div>
<div style="position:absolute;right:0;top:175px;width:5px;height:445px;background:#3068b2"></div>
<div style="position:absolute;left:0;bottom:0;width:100%;height:7px;background:#3068b2"></div>
</div>
<div class="t" style="left:600px;top:148px">Scenario Attributes...</div>
<div style="position:absolute;left:599px;top:169px;width:403px;height:583px;background:#f0f0f0;border:1px solid #2a5a9a;box-sizing:border-box"></div>

<div class="t" style="left:626px;top:186px">Scenario Name:</div>
<div style="position:absolute;left:713px;top:182px;width:263px;height:18px;background:#fff;box-sizing:border-box;border:2px solid;border-color:#6c6c6c #fafafa #fafafa #6c6c6c"></div>
<div style="position:absolute;left:715px;top:184px;width:114px;height:14px;background:#3399ff"></div>
<div class="t" style="left:716px;top:184px;color:#fff">JP001 No Other Choice</div>

<div class="t" style="left:656px;top:212px">Map Size:</div>
<div class="cb" style="left:713px;top:209px;width:37px;height:20px"><b>1</b></div>
<div class="t" style="left:759px;top:212px">X</div>
<div class="cb" style="left:774px;top:209px;width:36px;height:20px"><b>3</b></div>
<div class="t" style="left:821px;top:212px">(Sectors)</div>

<div class="t" style="left:622px;top:243px">Scenario Length:</div>
<div class="cb" style="left:713px;top:241px;width:97px;height:20px"><b>15 Turns</b></div>
<div class="t" style="left:642px;top:271px">Day Visibility:</div>
<div class="cb" style="left:713px;top:273px;width:97px;height:20px"><b>12 Hexes</b></div>
<div class="t" style="left:637px;top:308px">Night Visibility:</div>
<div class="cb" style="left:713px;top:306px;width:97px;height:20px"><b>1 Hex</b></div>
<div style="position:absolute;left:869px;top:308px;width:12px;height:13px;background:#fff;box-sizing:border-box;border:1px solid;border-color:#777 #ddd #ddd #777"></div>
<div class="t" style="left:888px;top:308px">Campaign Game</div>

<div class="gp" style="left:611px;top:341px;width:379px;height:78px"></div>
<div class="t lg" style="left:618px;top:334px">SIDE A</div>
<div class="t" style="left:623px;top:359px">SETS UP FIRST</div>
<div class="cb" style="left:713px;top:354px;width:97px;height:20px"><b>Russian</b></div>
<div class="t" style="left:826px;top:359px">OBA 1:</div>
<div class="cb" style="left:869px;top:354px;width:107px;height:20px"><b>NOT USED</b></div>
<div class="t" style="left:632px;top:386px">AI ATTITUDE:</div>
<div class="cb" style="left:713px;top:383px;width:97px;height:20px"><b>HOLD</b></div>
<div class="t" style="left:826px;top:386px">OBA 2:</div>
<div class="cb" style="left:869px;top:383px;width:107px;height:20px"><b>NOT USED</b></div>

<div class="gp" style="left:611px;top:434px;width:379px;height:78px"></div>
<div class="t lg" style="left:618px;top:427px">SIDE B</div>
<div class="t" style="left:626px;top:454px">MOVES FIRST</div>
<div class="cb" style="left:713px;top:452px;width:97px;height:20px"><b>German</b></div>
<div class="t" style="left:826px;top:454px">OBA 1:</div>
<div class="cb" style="left:869px;top:452px;width:107px;height:20px"><b>80mm MTR</b></div>
<div class="t" style="left:627px;top:483px">AI ATTITUDE:</div>
<div class="cb" style="left:713px;top:479px;width:97px;height:20px"><b>ADVANCE</b></div>
<div class="t" style="left:826px;top:482px">OBA 2:</div>
<div class="cb" style="left:869px;top:479px;width:107px;height:20px"><b>NOT USED</b></div>

<div class="t" style="left:620px;top:532px">Only SIDE B goes on the last turn</div>
<div style="position:absolute;left:787px;top:533px;width:12px;height:12px;background:#fff;box-sizing:border-box;border:1px solid;border-color:#777 #ddd #ddd #777"></div>

<div class="gp" style="left:611px;top:566px;width:379px;height:66px"></div>
<div class="t lg" style="left:618px;top:559px">Scenario Variable End</div>
<div class="t" style="left:815px;top:573px">&lt;= dr:</div>
<div class="cb" style="left:630px;top:597px;width:174px;height:20px"><b>Variable End Not Enabled</b></div>
<div class="cb" style="left:812px;top:597px;width:44px;height:20px"><b>1</b></div>

<div class="gp" style="left:611px;top:649px;width:379px;height:50px"></div>
<div class="t lg" style="left:618px;top:642px">Scenario Date</div>
<div class="cb" style="left:630px;top:663px;width:103px;height:20px"><b>March</b></div>
<div class="cb" style="left:740px;top:663px;width:65px;height:20px"><b>6</b></div>
<div class="cb" style="left:813px;top:663px;width:85px;height:20px"><b>1944</b></div>

<div class="bt" style="left:611px;top:718px;width:380px;height:23px;line-height:20px;border:2px solid;border-color:#777 #666 #666 #777;background:#f2f2f2"><span>OK</span></div>

<!-- status bar -->
<div class="sb" style="left:0;width:84px"></div><div class="t" style="left:5px;top:885px;transform:scaleX(.97)">HEX [ 1, 0 ]</div>
<div class="sb" style="left:86px;width:101px"></div><div class="t" style="left:91px;top:885px;transform:scaleX(.97)">Point [ 111, 9 ]</div>
<div class="sb" style="left:190px;width:80px"></div>
<div class="sb" style="left:273px;width:80px"></div>
<div class="sb" style="left:356px;width:378px"></div><div class="t" style="left:358px;top:885px;transform:scaleX(.97)">Scenario Name: JP001 No Other Choice</div>

</body></html>
